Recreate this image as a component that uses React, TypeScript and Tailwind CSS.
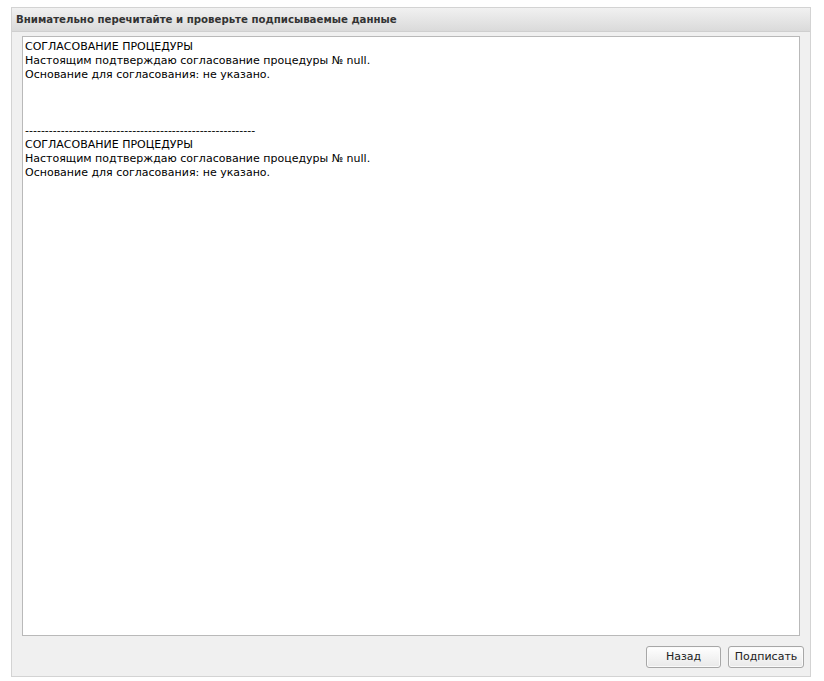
import React from 'react';

const lines = [
  'СОГЛАСОВАНИЕ ПРОЦЕДУРЫ',
  'Настоящим подтверждаю согласование процедуры № null.',
  'Основание для согласования: не указано.',
  '',
  '',
  '',
  '----------------------------------------------------------',
  'СОГЛАСОВАНИЕ ПРОЦЕДУРЫ',
  'Настоящим подтверждаю согласование процедуры № null.',
  'Основание для согласования: не указано.',
];

const Btn: React.FC<{ label: string; w: string }> = ({ label, w }) => (
  <button
    className={`h-[22px] ${w} rounded-[3px] border border-[#a7a7a7] bg-gradient-to-b from-white to-[#e9e9e9] text-[11px] text-[#222] shadow-[inset_0_0_0_1px_#fafafa]`}
  >
    {label}
  </button>
);

export default function App() {
  return (
    <div className="w-[824px] h-[681px] bg-white pt-[7px] pl-[11px] font-['DejaVu_Sans',Tahoma,sans-serif]">
      <div className="w-[800px] h-[670px] border border-[#d3d3d3] bg-[#f0f0f0] flex flex-col">
        <div className="h-[24px] shrink-0 flex items-center pl-[4px] bg-gradient-to-b from-[#f1f1f1] to-[#dadada] border-b border-[#cfcfcf]">
          <span className="text-[10.2px] font-bold text-[#333]">
            Внимательно перечитайте и проверьте подписываемые данные
          </span>
        </div>
        <div className="flex-1 flex flex-col px-[10px] pt-[4px]">
          <div className="h-[600px] border border-[#b9b9b9] bg-white px-[2px] pt-[3px] text-[11px] leading-[14px] text-black">
            {lines.map((l, i) => (
              <div key={i} className="h-[14px] whitespace-pre">{l}</div>
            ))}
          </div>
          <div className="flex justify-end gap-[7px] mt-[10px] mr-[-4px]">
            <Btn label="Назад" w="w-[75px]" />
            <Btn label="Подписать" w="w-[76px]" />
          </div>
        </div>
      </div>
    </div>
  );
}
